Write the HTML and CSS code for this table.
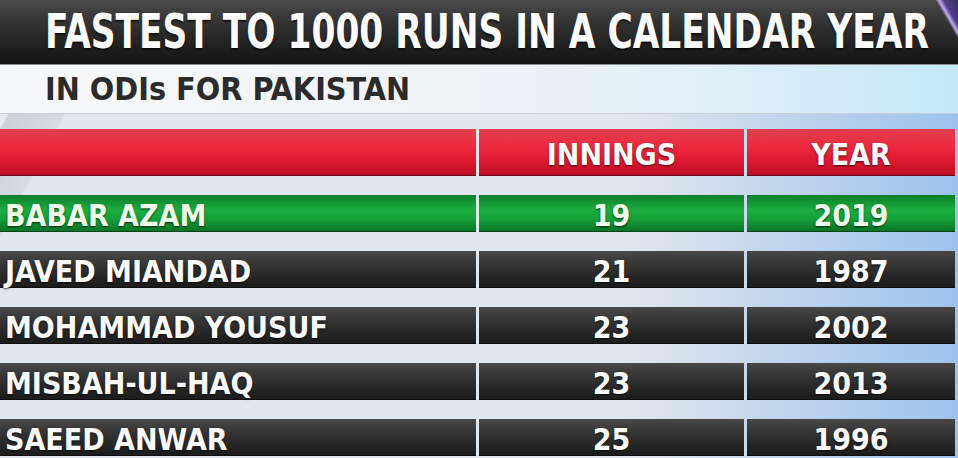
FILE: index.html
```html
<!doctype html>
<html>
	<head>
		<meta charset="utf-8">
		<title>Fastest to 1000 runs in a calendar year</title>
		<link rel="stylesheet" href="styles.css">
	</head>
	<body>
		<div class="board">
			<header class="title-bar">
				<h1 class="title">FASTEST TO 1000 RUNS IN A CALENDAR YEAR</h1>
			</header>
			<div class="sub-bar">
				<h2 class="subtitle">IN ODIs FOR PAKISTAN</h2>
			</div>

			<div class="stats">
				<div class="row head">
					<div class="cell name"></div>
					<div class="cell">INNINGS</div>
					<div class="cell">YEAR</div>
				</div>
				<div class="row top">
					<div class="cell name">BABAR AZAM</div>
					<div class="cell">19</div>
					<div class="cell">2019</div>
				</div>
				<div class="row">
					<div class="cell name">JAVED MIANDAD</div>
					<div class="cell">21</div>
					<div class="cell">1987</div>
				</div>
				<div class="row">
					<div class="cell name">MOHAMMAD YOUSUF</div>
					<div class="cell">23</div>
					<div class="cell">2002</div>
				</div>
				<div class="row">
					<div class="cell name">MISBAH-UL-HAQ</div>
					<div class="cell">23</div>
					<div class="cell">2013</div>
				</div>
				<div class="row">
					<div class="cell name">SAEED ANWAR</div>
					<div class="cell">25</div>
					<div class="cell">1996</div>
				</div>
			</div>
		</div>
	</body>
</html>
```

FILE: styles.css
```css
html, body {
	margin: 0;
	padding: 0;
}

body {
	width: 958px;
	height: 458px;
	overflow: hidden;
	font-family: "DejaVu Sans Condensed", "Liberation Sans Narrow", Roboto, sans-serif;
	font-weight: bold;
	background: #dfe5ec;
}

.board {
	display: flex;
	flex-direction: column;
	height: 458px;
	background:
		linear-gradient(90deg, rgba(223,229,236,0) 0%, rgba(223,229,236,0) 65%, rgba(140,184,236,0.8) 100%),
		linear-gradient(118deg, #e4e9ef 0px, #e4e9ef 60px, #c9d0d8 62px, #d6dce3 110px, #e2e7ed 112px, #e2e7ed 100%);
}

.title-bar {
	height: 65px;
	display: flex;
	align-items: center;
	padding-left: 45px;
	overflow: hidden;
	background:
		linear-gradient(60deg, rgba(0,0,0,0) 842px, rgba(200,175,255,0.95) 845px, rgba(90,60,160,0.75) 849px, rgba(50,35,100,0.7) 100%),
		linear-gradient(#4a4a4a 0%, #333 35%, #1c1c1c 80%, #151515 100%);
	border-bottom: 1px solid #8a8f96;
	box-sizing: border-box;
}

.title {
	margin: 0;
	margin-top: -3px;
	font-size: 48px;
	line-height: 1;
	color: #fbfbfb;
	text-shadow: 0 2px 2px rgba(0,0,0,0.6);
	white-space: nowrap;
	transform: scaleX(0.797);
	transform-origin: left center;
}

.sub-bar {
	height: 49px;
	display: flex;
	align-items: center;
	padding-left: 45px;
	background: linear-gradient(90deg, #f7f8f9 0%, #f1f4f7 40%, #e4f0f8 70%, #c4e8f8 100%);
	border-bottom: 1px solid #c8ced6;
	box-sizing: border-box;
}

.subtitle {
	margin: 0;
	font-size: 32px;
	line-height: 1;
	color: #2b2b2b;
	white-space: nowrap;
}

.stats {
	display: flex;
	flex-direction: column;
	gap: 19px;
	padding: 15px 3px 0 0;
}

.row {
	display: grid;
	grid-template-columns: 476px 265px 208px;
	column-gap: 3px;
	height: 37px;
}

.row.head {
	height: 47px;
}

.cell {
	display: flex;
	align-items: center;
	justify-content: center;
	padding-top: 4px;
	box-sizing: border-box;
	font-size: 30px;
	line-height: 1;
	color: #fafafa;
	text-shadow: 0 1px 2px rgba(0,0,0,0.7);
	background: linear-gradient(#484848 0%, #333 40%, #242424 75%, #1a1a1a 100%);
	box-shadow: inset 0 -1px 0 rgba(0,0,0,0.4);
}

.cell.name {
	justify-content: flex-start;
	padding-left: 5px;
}

.head .cell {
	background: linear-gradient(#e0404f 0%, #ee2a40 35%, #e01a32 65%, #b80e22 100%);
}

.top .cell {
	color: #eefbe8;
	background: linear-gradient(#0b7f28 0%, #1cad40 40%, #15a03a 65%, #087024 100%);
}
```
